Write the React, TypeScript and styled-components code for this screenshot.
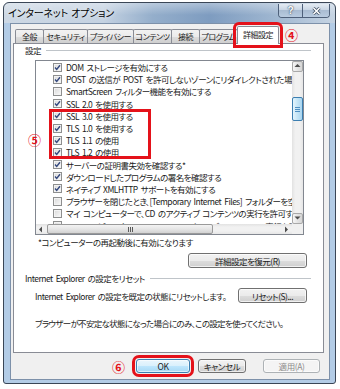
import styled, { createGlobalStyle } from "styled-components";

const GlobalStyle = createGlobalStyle`
  html, body { margin: 0; padding: 0; background: #fff; }
  body {
    font-family: "Noto Sans CJK JP", "Noto Sans", sans-serif;
    font-feature-settings: "palt";
    color: #1b1b1b;
  }
  * { box-sizing: border-box; }
`;

const tabs = [
	{ label: "全般", width: 29 },
	{ label: "セキュリティ", width: 45 },
	{ label: "プライバシー", width: 47 },
	{ label: "コンテンツ", width: 39 },
	{ label: "接続", width: 29 },
	{ label: "プログラム", width: 39 },
];

const settings: [string, boolean][] = [
	["DOM ストレージを有効にする", true],
	["POST の送信が POST を許可しないゾーンにリダイレクトされた場合に警告する", true],
	["SmartScreen フィルター機能を有効にする", false],
	["SSL 2.0 を使用する", true],
];

const tlsSettings: [string, boolean][] = [
	["SSL 3.0 を使用する", true],
	["TLS 1.0 を使用する", true],
	["TLS 1.1 の使用", true],
	["TLS 1.2 の使用", true],
];

const moreSettings: [string, boolean][] = [
	["サーバーの証明書失効を確認する*", true],
	["ダウンロードしたプログラムの署名を確認する", true],
	["ネイティブ XMLHTTP サポートを有効にする", true],
	["ブラウザーを閉じたとき、[Temporary Internet Files] フォルダーを空にする", false],
	["マイ コンピューターで、CD のアクティブ コンテンツの実行を許可する*", false],
	["マイ コンピューターのファイルでのアクティブ コンテンツの実行を許可する*", false],
];

const SettingRow = ({ label, checked }: { label: string; checked: boolean }) => (
	<Row>
		<Check>
			{checked && (
				<svg width="7" height="7" viewBox="0 0 7 7">
					<path d="M1 3.6 L2.7 5.4 L6 1.2" fill="none" stroke="#34487e" strokeWidth="1.4" />
				</svg>
			)}
		</Check>
		<RowText>{label}</RowText>
	</Row>
);

const Arrow = ({ dir }: { dir: "up" | "down" | "left" | "right" }) => {
	const paths = {
		up: "M0.5 4 L3.5 1 L6.5 4 Z",
		down: "M0.5 1.5 L3.5 4.5 L6.5 1.5 Z",
		left: "M4 0.5 L1 3.5 L4 6.5 Z",
		right: "M2 0.5 L5 3.5 L2 6.5 Z",
	};
	return (
		<svg width="7" height="7" viewBox="0 0 7 7">
			<path d={paths[dir]} fill="#4d4d4d" />
		</svg>
	);
};

export default function App() {
	return (
		<>
			<GlobalStyle />
			<Window>
				<TitleBar>
					<Title>インターネット オプション</Title>
					<CaptionGroup>
						<CaptionButton $width={23}>?</CaptionButton>
						<CaptionButton $width={27}>
							<svg width="9" height="8" viewBox="0 0 9 8">
								<path d="M1.5 1 L7.5 7 M7.5 1 L1.5 7" stroke="#3b4a5e" strokeWidth="3" />
								<path d="M1.5 1 L7.5 7 M7.5 1 L1.5 7" stroke="#fff" strokeWidth="1.6" />
							</svg>
						</CaptionButton>
					</CaptionGroup>
				</TitleBar>
				<Client>
					<TabRow>
						{tabs.map((t) => (
							<Tab key={t.label} $width={t.width}>
								{t.label}
							</Tab>
						))}
						<ActiveTab $width={42}>詳細設定</ActiveTab>
						<Marker>④</Marker>
					</TabRow>
					<Panel>
						<GroupHeader>
							<GroupLabel>設定</GroupLabel>
							<GroupLine />
						</GroupHeader>
						<ListBox>
							<Rows>
								{settings.map(([label, checked]) => (
									<SettingRow key={label} label={label} checked={checked} />
								))}
								<Highlight>
									{tlsSettings.map(([label, checked]) => (
										<SettingRow key={label} label={label} checked={checked} />
									))}
								</Highlight>
								{moreSettings.map(([label, checked]) => (
									<SettingRow key={label} label={label} checked={checked} />
								))}
							</Rows>
							<VScroll>
								<ScrollButton>
									<Arrow dir="up" />
								</ScrollButton>
								<VThumb>
									<Grip $vertical />
								</VThumb>
								<ScrollButton $end>
									<Arrow dir="down" />
								</ScrollButton>
							</VScroll>
							<HScroll>
								<HArrow>
									<Arrow dir="left" />
								</HArrow>
								<HThumb>
									<Grip />
								</HThumb>
								<HArrow $end>
									<Arrow dir="right" />
								</HArrow>
							</HScroll>
							<Corner />
							<SideMarker>⑤</SideMarker>
						</ListBox>
						<Note>*コンピューターの再起動後に有効になります</Note>
						<PanelButton $width={119}>詳細設定を復元(R)</PanelButton>
						<GroupHeader $top={4}>
							<GroupLabel>Internet Explorer の設定をリセット</GroupLabel>
							<GroupLine />
						</GroupHeader>
						<ResetRow>
							<BodyText>Internet Explorer の設定を既定の状態にリセットします。</BodyText>
							<PanelButton $width={69}>リセット(S)...</PanelButton>
						</ResetRow>
						<Warning>ブラウザーが不安定な状態になった場合にのみ、この設定を使ってください。</Warning>
					</Panel>
					<Footer>
						<Marker $gap={11}>⑥</Marker>
						<DialogButton $width={54} $variant="default" $gap={8}>
							OK
						</DialogButton>
						<DialogButton $width={48} $gap={17}>
							キャンセル
						</DialogButton>
						<DialogButton $width={57} $variant="disabled">
							適用(A)
						</DialogButton>
					</Footer>
				</Client>
			</Window>
		</>
	);
}

const Window = styled.div`
	margin: 2px 0 0 3px;
	width: 333px;
	height: 382px;
	border: 1px solid #3a4656;
	border-radius: 6px 6px 3px 3px;
	background: linear-gradient(180deg, rgba(255, 255, 255, 0.35), rgba(255, 255, 255, 0) 60%) top / 100% 20px no-repeat,
		linear-gradient(90deg, #cdd8e4 0%, #c4d2e2 30%, #94aecb 45%, #7e9cc0 62%, #9cb4cf 80%, #c6d4e3 100%) top / 100% 20px
			no-repeat,
		#b3cce6;
	display: flex;
	flex-direction: column;
`;

const TitleBar = styled.div`
	height: 20px;
	display: flex;
	align-items: flex-start;
	justify-content: space-between;
	padding: 0 5px 0 4px;
`;

const Title = styled.div`
	align-self: center;
	font-size: 10px;
	line-height: 12px;
	color: #000;
	text-shadow: 0 0 4px rgba(255, 255, 255, 0.9);
	letter-spacing: -0.2px;
	word-spacing: 1px;
`;

const CaptionGroup = styled.div`
	display: flex;
	margin-top: 1px;
	border: 1px solid #4e607a;
	border-top: none;
	border-radius: 0 0 4px 4px;
	overflow: hidden;
`;

const CaptionButton = styled.div<{ $width: number }>`
	width: ${({ $width }) => $width}px;
	height: 13px;
	display: flex;
	align-items: center;
	justify-content: center;
	background: linear-gradient(180deg, #e4ebf3 0%, #c9d6e4 45%, #a9bcd2 50%, #b9cbe0 100%);
	color: #fff;
	font-family: "Liberation Sans", sans-serif;
	font-weight: 700;
	font-size: 10px;
	text-shadow: 0 0 2px #3b4a5e, 0 0 1px #3b4a5e;
	& + & {
		border-left: 1px solid #4e607a;
	}
`;

const Client = styled.div`
	margin: 0 5px 3px 6px;
	flex: 1;
	background: #f0f0f0;
	border: 1px solid #7d91aa;
	padding: 2px 5px 0 2px;
	display: flex;
	flex-direction: column;
`;

const TabRow = styled.div`
	height: 17px;
	display: flex;
	align-items: flex-end;
	padding-left: 2px;
`;

const Tab = styled.div<{ $width: number }>`
	width: ${({ $width }) => $width}px;
	height: 14px;
	margin-right: -1px;
	border: 1px solid #898c95;
	border-bottom: none;
	border-radius: 2px 2px 0 0;
	background: linear-gradient(180deg, #f2f2f2 0%, #ebebeb 50%, #dddddd 51%, #cfcfcf 100%);
	font-size: 8px;
	line-height: 13px;
	text-align: center;
	letter-spacing: -0.5px;
	white-space: nowrap;
	overflow: hidden;
`;

const ActiveTab = styled(Tab)`
	height: 18px;
	margin: 0 0 -1px 0;
	position: relative;
	z-index: 2;
	background: #fff;
	line-height: 16px;
	outline: 3px solid #e4121a;
	outline-offset: 1px;
	overflow: visible;
`;

const Marker = styled.span<{ $gap?: number }>`
	margin: 0 ${({ $gap }) => $gap ?? 0}px 0 6px;
	align-self: center;
	color: #e4121a;
	font-weight: 700;
	font-size: 13px;
	line-height: 13px;
`;

const SideMarker = styled(Marker)`
	position: absolute;
	left: -8px;
	top: 72px;
	margin: 0;
`;

const Panel = styled.div`
	width: 311px;
	height: 310px;
	border: 1px solid #898c95;
	background: #fff;
	display: flex;
	flex-direction: column;
	font-size: 8.5px;
	letter-spacing: -0.5px;
	word-spacing: 1.5px;
`;

const GroupHeader = styled.div<{ $top?: number }>`
	height: 12px;
	margin: ${({ $top }) => $top ?? 0}px 12px 0 11px;
	display: flex;
	align-items: center;
`;

const GroupLabel = styled.span`
	line-height: 12px;
	white-space: nowrap;
`;

const GroupLine = styled.div`
	flex: 1;
	height: 1px;
	margin-left: 5px;
	background: #bfc4c9;
`;

const ListBox = styled.div`
	position: relative;
	margin: 4px 0 0 21px;
	width: 269px;
	height: 175px;
	border: 1px solid #828790;
	display: grid;
	grid-template-columns: 1fr 11px;
	grid-template-rows: 1fr 10px;
`;

const Rows = styled.div`
	overflow: hidden;
	min-width: 0;
`;

const Row = styled.div`
	height: 12.2px;
	display: flex;
	align-items: center;
	padding-left: 17px;
	white-space: nowrap;
`;

const Check = styled.div`
	flex: none;
	width: 9px;
	height: 9px;
	margin-right: 4px;
	border: 1px solid #8e8f8f;
	background: linear-gradient(135deg, #d8d8d8, #fafafa);
	box-shadow: inset 0 0 0 1px #f3f3f3;
	display: flex;
	align-items: center;
	justify-content: center;
`;

const RowText = styled.span`
	line-height: 12px;
`;

const Highlight = styled.div`
	position: relative;
	&::after {
		content: "";
		position: absolute;
		left: 13px;
		top: -1px;
		bottom: 0;
		width: 96px;
		border: 3px solid #e4121a;
		pointer-events: none;
	}
`;

const VScroll = styled.div`
	display: flex;
	flex-direction: column;
	background: linear-gradient(90deg, #e2e2e2, #f1f1f1 30%, #f1f1f1 70%, #e6e6e6);
`;

const ScrollButton = styled.div<{ $end?: boolean }>`
	height: 11px;
	margin-top: ${({ $end }) => ($end ? "auto" : "0")};
	border: 1px solid #a9a9a9;
	border-radius: 2px;
	background: linear-gradient(90deg, #f6f6f6, #e4e4e4 50%, #d6d6d6);
	display: flex;
	align-items: center;
	justify-content: center;
`;

const VThumb = styled.div`
	margin-top: 25px;
	height: 24px;
	border: 1px solid #3c7fb1;
	border-radius: 2px;
	background: linear-gradient(90deg, #e3f4fc, #c4e5f6 50%, #a9d5f0);
	display: flex;
	align-items: center;
	justify-content: center;
`;

const Grip = styled.div<{ $vertical?: boolean }>`
	width: 5px;
	height: 5px;
	background: ${({ $vertical }) =>
		$vertical
			? "repeating-linear-gradient(180deg, #4f8fc2 0 1px, transparent 1px 2px)"
			: "repeating-linear-gradient(90deg, #5a5a5a 0 1px, transparent 1px 2px)"};
`;

const HScroll = styled.div`
	display: flex;
	align-items: stretch;
	background: linear-gradient(180deg, #e2e2e2, #f1f1f1 30%, #f1f1f1 70%, #e6e6e6);
`;

const HArrow = styled.div<{ $end?: boolean }>`
	width: 11px;
	margin-left: ${({ $end }) => ($end ? "auto" : "0")};
	display: flex;
	align-items: center;
	justify-content: center;
`;

const HThumb = styled.div`
	width: 166px;
	border: 1px solid #9a9a9a;
	border-radius: 2px;
	background: linear-gradient(180deg, #f4f4f4, #e6e6e6 50%, #d2d2d2);
	display: flex;
	align-items: center;
	justify-content: center;
`;

const Corner = styled.div`
	background: #f0f0f0;
`;

const Note = styled.div`
	margin: 1px 0 0 24px;
	line-height: 13px;
	white-space: nowrap;
`;

const PanelButton = styled.div<{ $width: number }>`
	align-self: flex-end;
	margin: 4px 16px 0 0;
	width: ${({ $width }) => $width}px;
	height: 15px;
	border: 1px solid #707070;
	border-radius: 3px;
	background: linear-gradient(180deg, #f2f2f2 0%, #ebebeb 50%, #dddddd 51%, #cfcfcf 100%);
	box-shadow: inset 0 0 0 1px rgba(255, 255, 255, 0.7);
	display: flex;
	align-items: center;
	justify-content: center;
	font-size: 8.5px;
	white-space: nowrap;
`;

const ResetRow = styled.div`
	margin-top: 4px;
	height: 15px;
	padding: 0 16px 0 21px;
	display: flex;
	align-items: center;
	justify-content: space-between;
	& > ${PanelButton} {
		margin: 0;
		align-self: stretch;
	}
`;

const BodyText = styled.span`
	line-height: 12px;
	white-space: nowrap;
`;

const Warning = styled.div`
	margin: 14px 0 0 21px;
	line-height: 12px;
	white-space: nowrap;
	letter-spacing: -0.7px;
`;

const Footer = styled.div`
	flex: 1;
	display: flex;
	align-items: center;
	justify-content: flex-end;
	padding-right: 4px;
`;

const DialogButton = styled.div<{ $width: number; $variant?: "default" | "disabled"; $gap?: number }>`
	width: ${({ $width }) => $width}px;
	height: 14px;
	margin-right: ${({ $gap }) => $gap ?? 0}px;
	border: 1px solid ${({ $variant }) => ($variant === "default" ? "#3c7fb1" : $variant === "disabled" ? "#adb2b5" : "#707070")};
	border-radius: 3px;
	background: ${({ $variant }) =>
		$variant === "default"
			? "linear-gradient(180deg, #eaf6fd 0%, #d9f0fc 50%, #bee6fd 51%, #a7d9f5 100%)"
			: $variant === "disabled"
			? "#f4f4f4"
			: "linear-gradient(180deg, #f2f2f2 0%, #ebebeb 50%, #dddddd 51%, #cfcfcf 100%)"};
	box-shadow: inset 0 0 0 1px rgba(255, 255, 255, 0.6);
	color: ${({ $variant }) => ($variant === "disabled" ? "#8c8c8c" : "#1b1b1b")};
	outline: ${({ $variant }) => ($variant === "default" ? "3px solid #e4121a" : "none")};
	outline-offset: 1px;
	display: flex;
	align-items: center;
	justify-content: center;
	font-size: 8.5px;
	letter-spacing: -0.4px;
	white-space: nowrap;
`;
